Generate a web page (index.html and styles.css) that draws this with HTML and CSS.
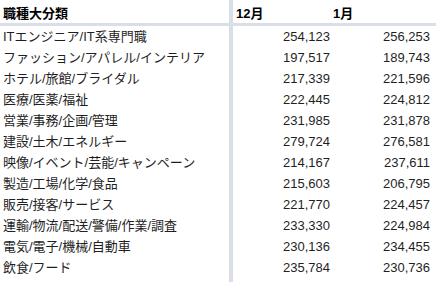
FILE: index.html
```html
<!DOCTYPE html>
<html lang="ja">
<head>
<meta charset="utf-8">
<link rel="stylesheet" href="styles.css">
</head>
<body>
<div class="sheet">
  <div class="row head">
    <div class="c name">職種大分類</div>
    <div class="c m1">12月</div>
    <div class="c m2">1月</div>
  </div>
  <div class="row"><div class="c name">ITエンジニア/IT系専門職</div><div class="c n1">254,123</div><div class="c n2">256,253</div></div>
  <div class="row"><div class="c name">ファッション/アパレル/インテリア</div><div class="c n1">197,517</div><div class="c n2">189,743</div></div>
  <div class="row"><div class="c name">ホテル/旅館/ブライダル</div><div class="c n1">217,339</div><div class="c n2">221,596</div></div>
  <div class="row"><div class="c name">医療/医薬/福祉</div><div class="c n1">222,445</div><div class="c n2">224,812</div></div>
  <div class="row"><div class="c name">営業/事務/企画/管理</div><div class="c n1">231,985</div><div class="c n2">231,878</div></div>
  <div class="row"><div class="c name">建設/土木/エネルギー</div><div class="c n1">279,724</div><div class="c n2">276,581</div></div>
  <div class="row"><div class="c name">映像/イベント/芸能/キャンペーン</div><div class="c n1">214,167</div><div class="c n2">237,611</div></div>
  <div class="row"><div class="c name">製造/工場/化学/食品</div><div class="c n1">215,603</div><div class="c n2">206,795</div></div>
  <div class="row"><div class="c name">販売/接客/サービス</div><div class="c n1">221,770</div><div class="c n2">224,457</div></div>
  <div class="row"><div class="c name">運輸/物流/配送/警備/作業/調査</div><div class="c n1">233,330</div><div class="c n2">224,984</div></div>
  <div class="row"><div class="c name">電気/電子/機械/自動車</div><div class="c n1">230,136</div><div class="c n2">234,455</div></div>
  <div class="row"><div class="c name">飲食/フード</div><div class="c n1">235,784</div><div class="c n2">230,736</div></div>
  <div class="fill"></div>
</div>
</body>
</html>
```
FILE: styles.css
```css
html, body {
  margin: 0;
  padding: 0;
  background: #ffffff;
}
.sheet {
  display: flex;
  flex-direction: column;
  height: 100vh;
  font-family: "Liberation Sans", "Noto Sans CJK JP", sans-serif;
  font-size: 13px;
  color: #1f1f1f;
}
.row {
  display: grid;
  grid-template-columns: 233px 99px 104px;
  height: 21px;
  line-height: 21px;
}
.head {
  height: 26px;
  line-height: 17px;
  font-weight: bold;
  color: #000000;
  border-bottom: 3px solid #dadfe7;
  box-sizing: border-box;
}
.head .c {
  padding-top: 5px;
}
.c {
  white-space: nowrap;
  overflow: hidden;
}
.name {
  box-sizing: border-box;
  padding-left: 3px;
  border-right: 4px solid #dadfe7;
}
.m1 {
  padding-left: 3px;
}
.m2 {
  padding-left: 1px;
}
.n1 {
  text-align: right;
  padding-right: 2px;
}
.n2 {
  text-align: right;
  padding-right: 6px;
}
.fill {
  flex: 1;
  width: 233px;
  box-sizing: border-box;
  border-right: 4px solid #dadfe7;
}
```
